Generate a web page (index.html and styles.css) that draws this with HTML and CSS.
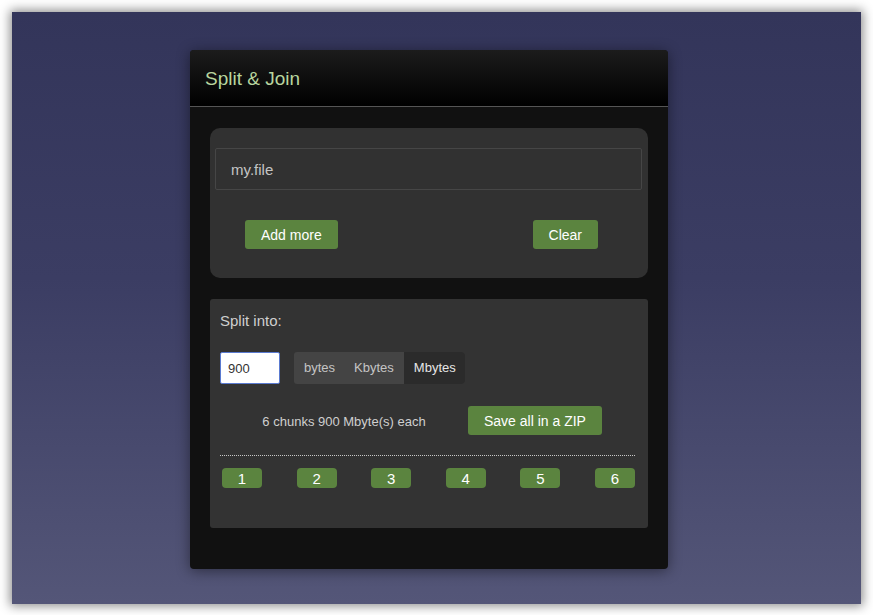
FILE: index.html
```html
<!DOCTYPE html>
<html lang="en">
<head>
    <meta charset="UTF-8">
    <meta name="viewport" content="width=device-width, initial-scale=1.0">
    <title>Split &amp; Join</title>
    <link rel="stylesheet" href="styles.css">
</head>
<body>
<div class="desk">
    <div class="panel">
        <div class="panel_head">Split &amp; Join</div>
        <div class="panel_body">
            <div class="files">
                <div class="file_input">my.file</div>
                <div class="file_buttons">
                    <button type="button" class="btn">Add more</button>
                    <button type="button" class="btn">Clear</button>
                </div>
            </div>
            <div class="split">
                <div class="split_label">Split into:</div>
                <div class="size_row">
                    <input type="text" class="size_input" value="900">
                    <div class="units">
                        <span class="unit">bytes</span>
                        <span class="unit">Kbytes</span>
                        <span class="unit active">Mbytes</span>
                    </div>
                </div>
                <div class="summary_row">
                    <span class="summary">6 chunks 900 Mbyte(s) each</span>
                    <button type="button" class="btn">Save all in a ZIP</button>
                </div>
                <hr>
                <div class="chunks">
                    <button type="button" class="chunk">1</button>
                    <button type="button" class="chunk">2</button>
                    <button type="button" class="chunk">3</button>
                    <button type="button" class="chunk">4</button>
                    <button type="button" class="chunk">5</button>
                    <button type="button" class="chunk">6</button>
                </div>
            </div>
        </div>
    </div>
</div>
</body>
</html>
```

FILE: styles.css
```css
body{
    font-family: "Liberation Sans", Arial, sans-serif;
    margin: 0px;
    background: white;
    width: 873px;
    height: 615px;
    overflow: hidden;
}
.desk{
    margin: 12px 0 0 12px;
    width: 849px;
    height: 592px;
    background: linear-gradient(to bottom, #33355a 0%, #3b3d63 45%, #545678 100%);
    box-shadow: 0 0 10px 2px rgba(0,0,0,0.45);
    padding-top: 38px;
    padding-left: 178px;
    box-sizing: border-box;
}
.panel{
    width: 478px;
    background: #111;
    border-radius: 4px;
    box-shadow: 0 2px 14px rgba(0,0,0,0.45);
    padding-bottom: 41px;
}
.panel_head{
    height: 56px;
    line-height: 57px;
    padding-left: 15px;
    font-size: 19px;
    color: #b8d59e;
    background: linear-gradient(to bottom, #1c1c1c, #000);
    border-bottom: 1px solid #555;
    border-radius: 4px 4px 0 0;
}
.panel_body{
    padding: 21px 20px 0 20px;
}
.files{
    background: #313131;
    border-radius: 10px;
    padding: 20px 6px 29px 5px;
}
.file_input{
    height: 40px;
    line-height: 41px;
    border: 1px solid #464646;
    border-radius: 2px;
    padding-left: 15px;
    color: #c4c4c4;
    font-size: 15px;
}
.file_buttons{
    display: flex;
    justify-content: space-between;
    margin-top: 30px;
    padding-left: 30px;
    padding-right: 44px;
}
.btn{
    background: #5b843f;
    color: white;
    border: 0;
    border-radius: 3px;
    font-family: "Liberation Sans", Arial, sans-serif;
    font-size: 14px;
    height: 29px;
    padding: 0 16px;
}
.split{
    margin-top: 21px;
    background: #333;
    border-radius: 3px;
    padding: 13px 13px 40px 10px;
    height: 229px;
    box-sizing: border-box;
}
.split_label{
    color: #cfcfcf;
    font-size: 15px;
}
.size_row{
    display: flex;
    margin-top: 23px;
    gap: 14px;
}
.size_input{
    width: 60px;
    height: 32px;
    box-sizing: border-box;
    border: 1px solid #5a7ad0;
    border-radius: 2px;
    padding-left: 7px;
    font-family: "Liberation Sans", Arial, sans-serif;
    font-size: 13px;
    color: #333;
}
.units{
    display: flex;
    background: #444;
    border-radius: 3px;
    height: 32px;
}
.unit{
    line-height: 32px;
    color: #c4c4c4;
    font-size: 13px;
    padding: 0 10px;
}
.unit:first-child{
    padding-right: 9px;
}
.unit.active{
    background: #2b2b2b;
    color: #e6e6e6;
    border-radius: 0 3px 3px 0;
    padding-right: 9px;
}
.summary_row{
    display: flex;
    align-items: center;
    margin-top: 22px;
}
.summary{
    color: #cfcfcf;
    font-size: 13px;
    width: 248px;
    text-align: center;
    padding-top: 2px;
}
hr{
    border: 0;
    border-bottom: 1px dotted #c8c8c8;
    margin: 20px 0 12px 0;
}
.chunks{
    display: flex;
    justify-content: space-between;
    padding-left: 2px;
}
.chunk{
    width: 40px;
    height: 20px;
    background: #5b843f;
    color: white;
    border: 0;
    border-radius: 4px;
    font-family: "Liberation Sans", Arial, sans-serif;
    font-size: 15px;
    padding: 0;
}
```
